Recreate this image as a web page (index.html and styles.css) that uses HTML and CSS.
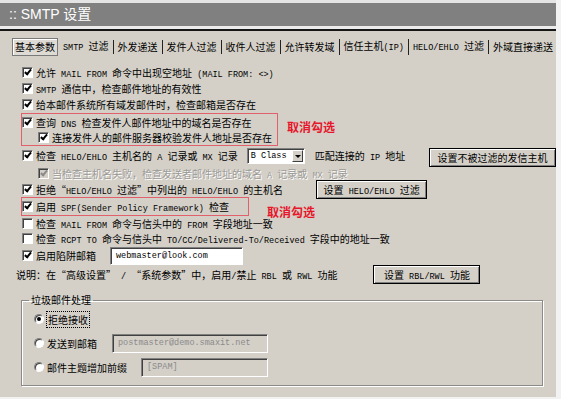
FILE: index.html
```html
<!DOCTYPE html>
<html lang="zh-CN">
<head>
    <meta charset="UTF-8">
    <meta name="viewport" content="width=device-width, initial-scale=1.0">
    <title>SMTP 设置</title>
    <link rel="stylesheet" href="styles.css">
</head>
<body>
<div class="win">
    <div class="title">:: SMTP 设置</div>
    <div class="rule"></div>

    <div class="tabs">
        <span class="tab first">基本参数</span>
        <span class="tab cur"><span class="en">SMTP </span>过滤</span>
        <span class="tab">外发递送</span>
        <span class="tab">发件人过滤</span>
        <span class="tab">收件人过滤</span>
        <span class="tab">允许转发域</span>
        <span class="tab">信任主机<span class="en">(IP)</span></span>
        <span class="tab"><span class="en">HELO/EHLO </span>过滤</span>
        <span class="tab">外域直接递送</span>
    </div>

    <div class="content">
        <div class="row"><span class="cb on"></span><span class="txt">允许<span class="en"> MAIL FROM </span>命令中出现空地址<span class="en"> (MAIL FROM: &lt;&gt;)</span></span></div>
        <div class="row"><span class="cb on"></span><span class="txt"><span class="en">SMTP </span>通信中，检查邮件地址的有效性</span></div>
        <div class="row h17"><span class="cb on"></span><span class="txt">给本邮件系统所有域发邮件时，检查邮箱是否存在</span></div>

        <div class="mark dns">
            <div class="row"><span class="cb on"></span><span class="txt">查询<span class="en"> DNS </span>检查发件人邮件地址中的域名是否存在</span></div>
            <div class="row sub h15"><span class="cb on"></span><span class="txt">连接发件人的邮件服务器校验发件人地址是否存在</span></div>
            <span class="note">取消勾选</span>
        </div>

        <div class="row h19">
            <span class="cb on"></span><span class="txt">检查<span class="en"> HELO/EHLO </span>主机名的<span class="en"> A </span>记录或<span class="en"> MX </span>记录</span>
            <span class="sel"><span class="val en">B Class</span><span class="arr"></span></span>
            <span class="txt after-sel">匹配连接的<span class="en"> IP </span>地址</span>
            <button class="btn btn-hosts">设置不被过滤的发信主机</button>
        </div>
        <div class="row sub off"><span class="cb on dis"></span><span class="txt">当检查主机名失败，检查发送者邮件地址的域名<span class="en"> A </span>记录或<span class="en"> MX </span>记录</span></div>
        <div class="row">
            <span class="cb on"></span><span class="txt">拒绝“<span class="en">HELO/EHLO </span>过滤”中列出的<span class="en"> HELO/EHLO </span>的主机名</span>
            <button class="btn btn-helo">设置<span class="en"> HELO/EHLO </span>过滤</button>
        </div>

        <div class="mark spf">
            <div class="row"><span class="cb on"></span><span class="txt">启用<span class="en"> SPF(Sender Policy Framework) </span>检查</span></div>
            <span class="note">取消勾选</span>
        </div>

        <div class="row h14"><span class="cb"></span><span class="txt">检查<span class="en"> MAIL FROM </span>命令与信头中的<span class="en"> FROM </span>字段地址一致</span></div>
        <div class="row h17"><span class="cb"></span><span class="txt">检查<span class="en"> RCPT TO </span>命令与信头中<span class="en"> TO/CC/Delivered-To/Received </span>字段中的地址一致</span></div>
        <div class="row h17"><span class="cb on"></span><span class="txt">启用陷阱邮箱</span><span class="field trap">webmaster@look.com</span></div>
        <div class="row h21 note-row">
            <span class="txt">说明：在“高级设置”<span class="en"> / </span>“系统参数”中，启用<span class="en">/</span>禁止<span class="en"> RBL </span>或<span class="en"> RWL </span>功能</span>
            <button class="btn btn-rbl">设置<span class="en"> RBL/RWL </span>功能</button>
        </div>

        <fieldset class="group">
            <legend>垃圾邮件处理</legend>
            <div class="opt"><span class="rd on"></span><span class="txt focus">拒绝接收</span></div>
            <div class="opt"><span class="rd"></span><span class="txt">发送到邮箱</span><span class="field off box-mail">postmaster@demo.smaxit.net</span></div>
            <div class="opt"><span class="rd"></span><span class="txt">邮件主题增加前缀</span><span class="field off box-prefix">[SPAM]</span></div>
        </fieldset>
    </div>
</div>
</body>
</html>
```

FILE: styles.css
```css
body {
    margin: 0;
    background-color: #f2f2f2;
    font-family: "Noto Sans CJK SC", sans-serif;
    font-size: 10px;
    color: #000;
}
.win {
    width: 556px;
    height: 397px;
    box-sizing: border-box;
    border-top: 3px solid #e4e4e4;
    background-color: #d4d0c8;
}
.title {
    height: 23px;
    line-height: 23px;
    padding-left: 9px;
    background-color: #808080;
    color: #fff;
    font-family: "Liberation Sans", "Noto Sans CJK SC", sans-serif;
    font-size: 14px;
}
.rule {
    height: 3px;
    background-color: #ebebeb;
    border-bottom: 2px solid #161616;
}
.en {
    font-family: "Liberation Mono", monospace;
    font-size: 8.5px;
}

/* tabs */
.tabs {
    display: flex;
    align-items: center;
    height: 18px;
    margin-top: 7px;
    padding-left: 12px;
    white-space: nowrap;
    overflow: hidden;
}
.tab {
    padding: 0 4px;
    line-height: 14px;
    border-left: 1px solid #222;
}
.tab.first {
    border: 1px solid #7a7a7a;
    padding: 1px 2px;
    background-color: #dedbd5;
    box-shadow: inset 1px 1px #fff;
}
.tab.cur {
    border-left: none;
    padding-left: 5px;
}

/* rows */
.content {
    padding-top: 8px;
}
.row {
    display: flex;
    align-items: center;
    height: 16px;
    padding-left: 22px;
    white-space: nowrap;
}
.row.h14 { height: 14px; }
.row.h15 { height: 15px; }
.row.h17 { height: 17px; }
.row.h19 { height: 19px; }
.row.h21 { height: 21px; }
.row.sub {
    padding-left: 38px;
}
.row.off .txt {
    color: #9c9a96;
    text-shadow: 1px 1px #fff;
}
.note-row {
    padding-left: 16px;
}

.cb {
    position: relative;
    flex: none;
    width: 9px;
    height: 9px;
    margin-right: 3px;
    background-color: #fff;
    border: 1px solid;
    border-color: #808080 #fff #fff #808080;
    box-shadow: inset 1px 1px #404040;
}
.cb.on::after {
    content: "";
    position: absolute;
    left: 3px;
    top: 0;
    width: 2px;
    height: 5px;
    border: solid #000;
    border-width: 0 2px 2px 0;
    transform: rotate(40deg);
}
.cb.dis {
    background-color: #d4d0c8;
}
.cb.dis::after {
    border-color: #8a8a8a;
}

/* red marks */
.mark {
    position: relative;
    box-sizing: border-box;
    margin-left: 21px;
    border: 1px solid #e2606c;
}
.mark .row {
    padding-left: 0;
}
.mark .row.sub {
    padding-left: 16px;
}
.mark.dns {
    width: 257px;
}
.mark.spf {
    width: 228px;
    padding-bottom: 1px;
}
.note {
    position: absolute;
    top: 4px;
    left: calc(100% + 10px);
    color: #e6172b;
    font-size: 12px;
    font-weight: bold;
    white-space: nowrap;
}
.mark.spf .note {
    top: 5px;
    left: calc(100% + 19px);
}

/* controls */
.btn {
    flex: none;
    height: 19px;
    box-sizing: border-box;
    padding: 0;
    border: 1px solid #000;
    background-color: #d4d0c8;
    box-shadow: inset 1px 1px #fff, inset -1px -1px #808080;
    font: inherit;
    color: #000;
    cursor: pointer;
}
.btn-hosts {
    width: 127px;
    margin-left: auto;
    margin-top: 3px;
}
.btn-helo {
    width: 111px;
    margin-left: 33px;
    margin-top: 1px;
}
.btn-rbl {
    width: 107px;
    margin-left: 36px;
}
.sel {
    display: flex;
    align-items: center;
    flex: none;
    width: 56px;
    height: 14px;
    margin-left: 9px;
    background-color: #fff;
    border: 1px solid;
    border-color: #808080 #fff #fff #808080;
    box-shadow: inset 1px 1px #404040;
}
.sel .val {
    flex: 1;
    padding-left: 3px;
}
.sel .arr {
    position: relative;
    width: 11px;
    height: 12px;
    margin-right: 1px;
    background-color: #d4d0c8;
    box-sizing: border-box;
    border: 1px solid;
    border-color: #fff #404040 #404040 #fff;
}
.sel .arr::after {
    content: "";
    position: absolute;
    left: 2px;
    top: 4px;
    border-left: 3px solid transparent;
    border-right: 3px solid transparent;
    border-top: 3px solid #000;
}
.after-sel {
    margin-left: 10px;
}
.field {
    display: flex;
    align-items: center;
    flex: none;
    box-sizing: border-box;
    height: 18px;
    padding: 0 5px;
    background-color: #fff;
    border: 1px solid;
    border-color: #808080 #fff #fff #808080;
    box-shadow: inset 1px 1px #404040;
    font-family: "Liberation Mono", monospace;
    font-size: 8.5px;
}
.field.off {
    height: 19px;
    background-color: #d4d0c8;
    color: #8a8a8a;
}
.trap {
    width: 133px;
    margin-left: 14px;
}
.box-mail {
    width: 156px;
    margin-left: 15px;
}
.box-prefix {
    width: 127px;
    margin-left: 14px;
}

/* spam group */
.group {
    box-sizing: border-box;
    width: 522px;
    margin: 8px 0 0 21px;
    padding: 0 0 6px 12px;
    border: 1px solid #8c8a86;
    box-shadow: inset 1px 1px #fff, 1px 1px #fff;
}
.group legend {
    margin-left: -5px;
    padding: 0 2px;
    line-height: 14px;
}
.opt {
    display: flex;
    align-items: center;
    height: 24px;
    white-space: nowrap;
}
.rd {
    position: relative;
    flex: none;
    width: 8px;
    height: 8px;
    margin-right: 3px;
    border-radius: 50%;
    background-color: #fff;
    border: 1px solid;
    border-color: #808080 #fff #fff #808080;
    box-shadow: inset 1px 1px #404040;
}
.rd.on::after {
    content: "";
    position: absolute;
    left: 2px;
    top: 2px;
    width: 4px;
    height: 4px;
    border-radius: 50%;
    background-color: #000;
}
.focus {
    outline: 1px dotted #000;
    padding: 0 1px;
}
```
